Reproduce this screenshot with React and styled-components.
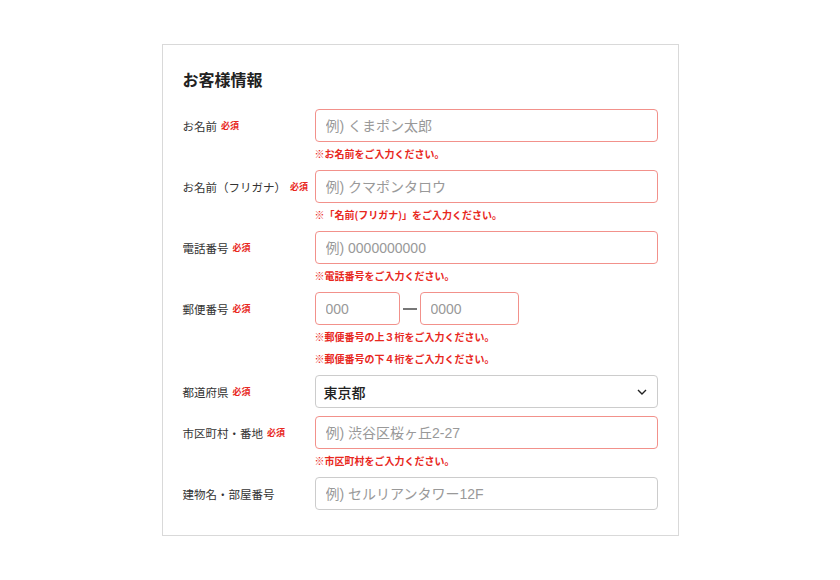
import React from "react";
import styled, { createGlobalStyle } from "styled-components";

const GlobalStyle = createGlobalStyle`
  * { box-sizing: border-box; }
  body {
    margin: 0;
    background: #fff;
    font-family: "Noto Sans CJK JP", "Noto Sans", sans-serif;
    color: #333;
  }
`;

const fields = [
  { label: "お名前", required: true, placeholder: "例) くまポン太郎", errors: ["※お名前をご入力ください。"] },
  { label: "お名前（フリガナ）", required: true, placeholder: "例) クマポンタロウ", errors: ["※「名前(フリガナ)」をご入力ください。"] },
  { label: "電話番号", required: true, placeholder: "例) 0000000000", errors: ["※電話番号をご入力ください。"] },
];

function Chevron() {
  return (
    <svg width="10" height="6" viewBox="0 0 10 6">
      <path d="M1 1l4 4 4-4" fill="none" stroke="#222" strokeWidth="1.4" />
    </svg>
  );
}

function Row({ label, required, children, errors = [] }) {
  return (
    <FormRow>
      <Label>
        {label}
        {required && <Required>必須</Required>}
      </Label>
      <Field>
        {children}
        {errors.map((e) => (
          <ErrorText key={e}>{e}</ErrorText>
        ))}
      </Field>
    </FormRow>
  );
}

export default function App() {
  return (
    <>
      <GlobalStyle />
      <Page>
        <Card>
          <Title>お客様情報</Title>
          {fields.map((f) => (
            <Row key={f.label} {...f}>
              <Input $error placeholder={f.placeholder} />
            </Row>
          ))}
          <Row
            label="郵便番号"
            required
            errors={["※郵便番号の上３桁をご入力ください。", "※郵便番号の下４桁をご入力ください。"]}
          >
            <ZipWrap>
              <Input $error $width="85px" placeholder="000" />
              <Dash />
              <Input $error $width="99px" placeholder="0000" />
            </ZipWrap>
          </Row>
          <Row label="都道府県" required>
            <Select>
              <span>東京都</span>
              <Chevron />
            </Select>
          </Row>
          <Row label="市区町村・番地" required errors={["※市区町村をご入力ください。"]}>
            <Input $error placeholder="例) 渋谷区桜ヶ丘2-27" />
          </Row>
          <Row label="建物名・部屋番号">
            <Input placeholder="例) セルリアンタワー12F" />
          </Row>
        </Card>
      </Page>
    </>
  );
}

const Page = styled.div`
  display: flex;
  justify-content: center;
  padding-top: 44px;
`;

const Card = styled.div`
  width: 517px;
  border: 1px solid #d9d9d9;
  padding: 22px 20px 25px 20px;
  display: flex;
  flex-direction: column;
  gap: 8px;
`;

const Title = styled.h2`
  margin: 0 0 10px;
  font-size: 16px;
  line-height: 24px;
  font-weight: 700;
  color: #222;
`;

const FormRow = styled.div`
  display: flex;
  align-items: flex-start;
`;

const Label = styled.div`
  width: 132px;
  flex-shrink: 0;
  height: 33px;
  display: flex;
  align-items: center;
  font-size: 11.5px;
  color: #333;
  white-space: nowrap;
`;

const Required = styled.span`
  margin-left: 4px;
  font-size: 9px;
  font-weight: 700;
  color: #e8281e;
`;

const Field = styled.div`
  flex: 1;
  display: flex;
  flex-direction: column;
`;

const Input = styled.input`
  width: ${(p) => p.$width || "100%"};
  height: 33px;
  border: 1px solid ${(p) => (p.$error ? "#f2918b" : "#cccccc")};
  border-radius: 4px;
  padding: 0 10px;
  font-family: "Liberation Sans", "Noto Sans CJK JP", sans-serif;
  font-size: 14px;
  color: #222;
  outline: none;
  &::placeholder {
    color: #999;
  }
`;

const ZipWrap = styled.div`
  display: flex;
  align-items: center;
`;

const Dash = styled.span`
  width: 14px;
  height: 2px;
  margin: 0 3px;
  background: #777;
`;

const Select = styled.div`
  height: 33px;
  border: 1px solid #cccccc;
  border-radius: 4px;
  padding: 0 10px 0 8px;
  display: flex;
  align-items: center;
  justify-content: space-between;
  font-size: 14px;
  font-weight: 500;
  color: #222;
`;

const ErrorText = styled.p`
  margin: 4px 0 0;
  font-size: 10px;
  line-height: 15px;
  font-weight: 700;
  color: #e8281e;
  & + & {
    margin-top: 7px;
  }
  &:last-child {
    margin-bottom: 1px;
  }
`;
